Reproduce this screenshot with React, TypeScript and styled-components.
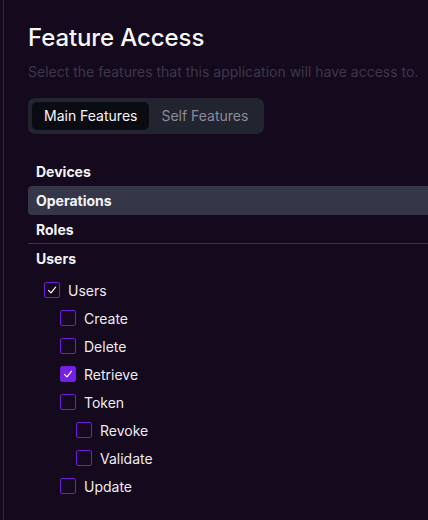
import React from "react";
import styled, { createGlobalStyle } from "styled-components";

const Global = createGlobalStyle`
  html, body { margin: 0; padding: 0; background: #15091d; }
  body { font-family: Inter, "Noto Sans", sans-serif; color: #fff; overflow: hidden; }
  * { box-sizing: border-box; }
`;

const Page = styled.div`
  display: flex;
  height: 520px;
  padding-left: 3px;
  background: #15091d;
`;

const Panel = styled.main`
  flex: 1;
  border-left: 1px solid #2a2b36;
  padding: 22px 0 0 24px;
  display: flex;
  flex-direction: column;
  min-width: 0;
`;

const Title = styled.h1`
  margin: 0;
  font-size: 24px;
  line-height: 32px;
  font-weight: 500;
  letter-spacing: -0.1px;
  color: #f7f7f9;
`;

const Subtitle = styled.p`
  margin: 8px 0 0;
  font-size: 14px;
  line-height: 20px;
  color: #3c3848;
  white-space: nowrap;
`;

const Tabs = styled.div`
  margin-top: 16px;
  align-self: flex-start;
  display: flex;
  padding: 4px;
  background: #222430;
  border-radius: 7px;
`;

const Tab = styled.button<{ $active?: boolean }>`
  border: none;
  font-family: inherit;
  font-size: 14px;
  line-height: 20px;
  padding: 4px 12px;
  border-radius: 5px;
  cursor: pointer;
  background: ${(p) => (p.$active ? "#0b0b14" : "transparent")};
  color: ${(p) => (p.$active ? "#f5f5f7" : "#8b8b98")};
`;

const Sections = styled.div`
  margin-top: 23px;
  display: flex;
  flex-direction: column;
`;

const SectionRow = styled.div<{ $hover?: boolean; $divider?: boolean }>`
  height: 29px;
  display: flex;
  align-items: center;
  padding-left: 8px;
  font-size: 14px;
  font-weight: 700;
  color: #f3f3f5;
  background: ${(p) => (p.$hover ? "#353748" : "transparent")};
  border-radius: ${(p) => (p.$hover ? "4px 0 0 4px" : "0")};
  border-bottom: 1px solid ${(p) => (p.$divider ? "#363849" : "transparent")};
`;

const List = styled.div`
  padding: 3px 0 0 16px;
  display: flex;
  flex-direction: column;
`;

const Item = styled.label<{ $level: number }>`
  height: 28px;
  display: flex;
  align-items: center;
  gap: 8px;
  padding-left: ${(p) => p.$level * 16}px;
  font-size: 14px;
  color: #ecebf0;
  cursor: pointer;
`;

const Box = styled.span<{ $state: "off" | "on" | "partial" }>`
  width: 16px;
  height: 16px;
  flex: none;
  border: 1.5px solid #6c1fd6;
  border-radius: 2px;
  background: ${(p) => (p.$state === "on" ? "#7420e6" : "transparent")};
  display: flex;
  align-items: center;
  justify-content: center;
`;

const Check = () => (
  <svg width="10" height="10" viewBox="0 0 10 10" fill="none">
    <path d="M1.5 5.3 L4 7.8 L8.6 2.2" stroke="#fff" strokeWidth="1.2" strokeLinecap="round" strokeLinejoin="round" />
  </svg>
);

type Feature = { label: string; level: number; state: "off" | "on" | "partial" };

const features: Feature[] = [
  { label: "Users", level: 0, state: "partial" },
  { label: "Create", level: 1, state: "off" },
  { label: "Delete", level: 1, state: "off" },
  { label: "Retrieve", level: 1, state: "on" },
  { label: "Token", level: 1, state: "off" },
  { label: "Revoke", level: 2, state: "off" },
  { label: "Validate", level: 2, state: "off" },
  { label: "Update", level: 1, state: "off" },
];

export default function App() {
  return (
    <>
      <Global />
      <Page>
        <Panel>
          <Title>Feature Access</Title>
          <Subtitle>Select the features that this application will have access to.</Subtitle>
          <Tabs>
            <Tab $active>Main Features</Tab>
            <Tab>Self Features</Tab>
          </Tabs>
          <Sections>
            <SectionRow>Devices</SectionRow>
            <SectionRow $hover>Operations</SectionRow>
            <SectionRow $divider>Roles</SectionRow>
            <SectionRow>Users</SectionRow>
            <List>
              {features.map((f) => (
                <Item key={f.label} $level={f.level}>
                  <Box $state={f.state}>{f.state !== "off" && <Check />}</Box>
                  {f.label}
                </Item>
              ))}
            </List>
          </Sections>
        </Panel>
      </Page>
    </>
  );
}
